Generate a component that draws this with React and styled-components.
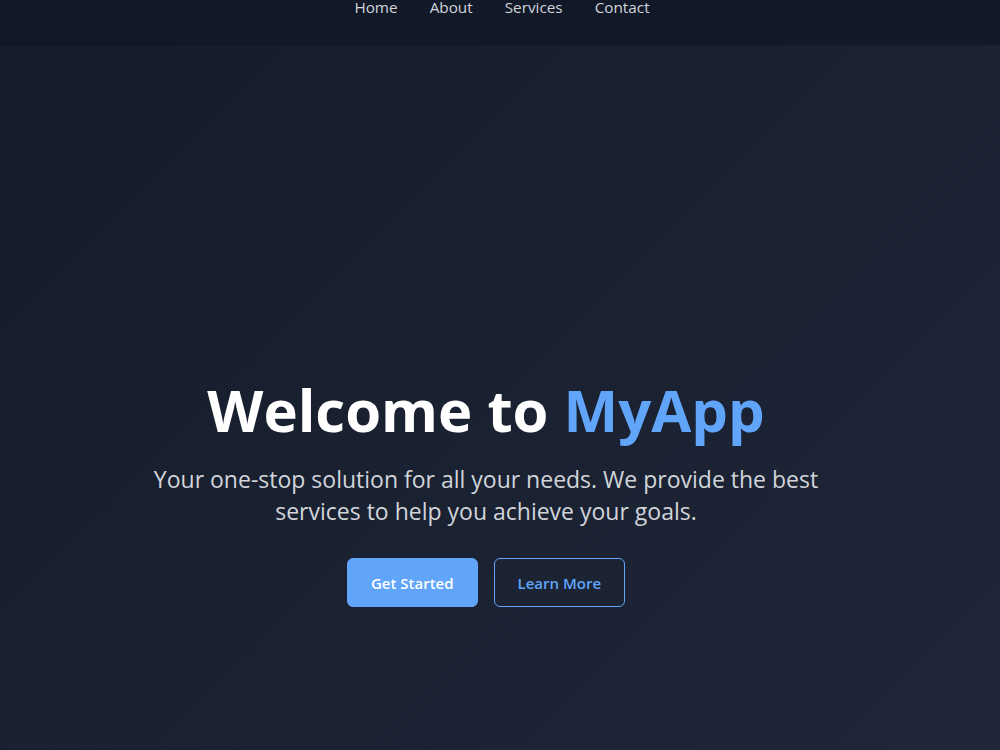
import React from 'react'
import styled, { createGlobalStyle } from 'styled-components'

const GlobalStyle = createGlobalStyle`
    html, body {
        margin: 0;
        padding: 0;
        background: #111827;
        font-family: "Open Sans", "Noto Sans", sans-serif;
        overflow: hidden;
    }
    * {
        box-sizing: border-box;
    }
`

function App() {
    return (
        <>
            <GlobalStyle />
            <Page>
                <Nav>
                    <NavLink>Home</NavLink>
                    <NavLink>About</NavLink>
                    <NavLink>Services</NavLink>
                    <NavLink>Contact</NavLink>
                </Nav>
                <Hero>
                    <Title>
                        Welcome to <span>MyApp</span>
                    </Title>
                    <Subtitle>
                        Your one-stop solution for all your needs. We provide the best
                        services to help you achieve your goals.
                    </Subtitle>
                    <Actions>
                        <Button primary>Get Started</Button>
                        <Button>Learn More</Button>
                    </Actions>
                </Hero>
            </Page>
        </>
    )
}

export default App

const Page = styled.div`
    display: flex;
    flex-direction: column;
    height: 750px;
`
const Nav = styled.nav`
    height: 44px;
    flex-shrink: 0;
    display: flex;
    justify-content: center;
    align-items: flex-start;
    gap: 32px;
    padding-left: 4px;
    background: #111827;
    box-shadow: 0 1px 2px rgba(0, 0, 0, 0.25);
    position: relative;
    z-index: 1;
`
const NavLink = styled.a`
    font-size: 15.3px;
    line-height: 15px;
    color: #d1d5db;
    cursor: pointer;
`
const Hero = styled.section`
    flex: 1;
    display: flex;
    flex-direction: column;
    align-items: center;
    justify-content: center;
    padding: 188px 52px 0 24px;
    text-align: center;
    background: linear-gradient(135deg, #141b2b 0%, #1a2131 50%, #1e2638 100%);
`
const Title = styled.h1`
    margin: 0;
    font-size: 58px;
    line-height: 70px;
    font-weight: 700;
    color: #ffffff;

    span {
        color: #60a5fa;
    }
`
const Subtitle = styled.p`
    margin: 18px 0 0;
    max-width: 700px;
    font-size: 23px;
    line-height: 32px;
    color: #d1d5db;
`
const Actions = styled.div`
    display: flex;
    gap: 16px;
    margin-top: 31px;
`
const Button = styled.button`
    height: 49px;
    padding: 0 23px;
    border-radius: 6px;
    font-family: inherit;
    font-size: 15px;
    font-weight: 600;
    cursor: pointer;
    border: 1px solid #60a5fa;
    background: ${p => (p.primary ? '#60a5fa' : '#1c2333')};
    color: ${p => (p.primary ? '#ffffff' : '#60a5fa')};
`
